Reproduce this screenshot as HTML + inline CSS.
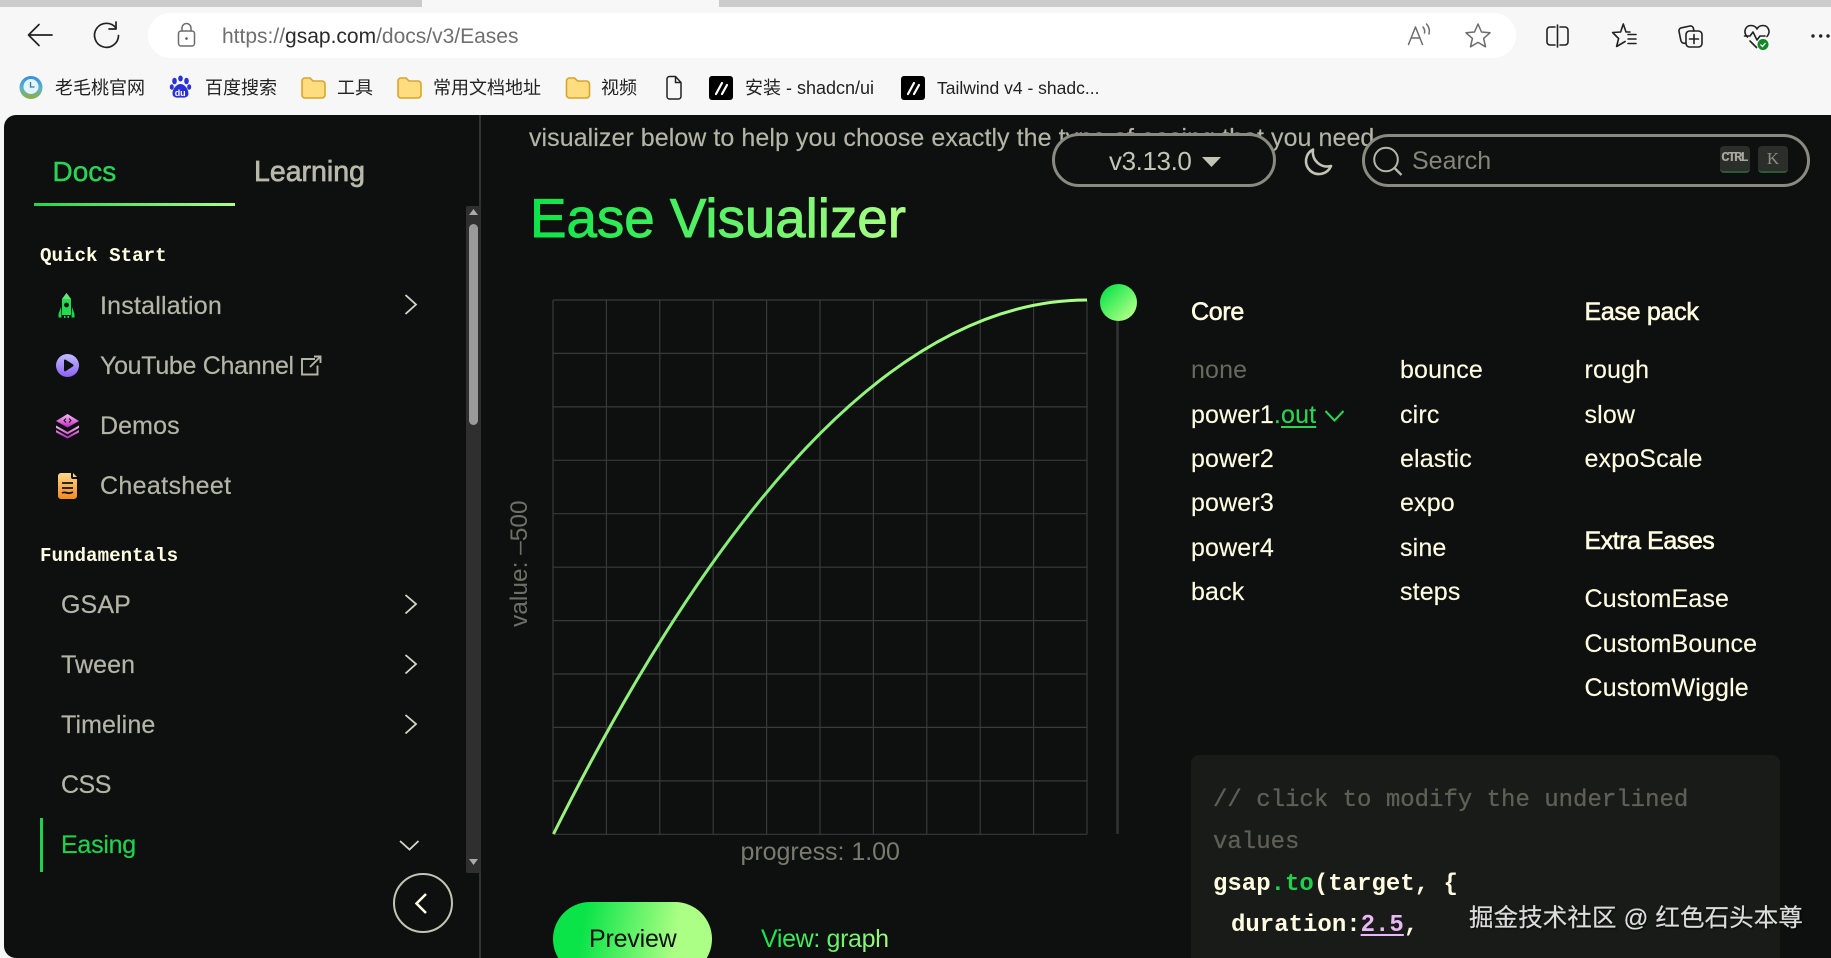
<!DOCTYPE html>
<html lang="zh-CN">
<head>
<meta charset="utf-8">
<title>Ease Visualizer</title>
<style>
html,body{margin:0;padding:0;width:1831px;height:958px;overflow:hidden;background:#f7f7f7;font-family:"Liberation Sans","Noto Sans CJK SC",sans-serif}
#root{position:relative;width:1831px;height:958px;overflow:hidden;background:#f7f7f7}
.t{position:absolute;white-space:nowrap;height:40px;line-height:40px;margin-top:-20px}
#panel{position:absolute;left:4px;top:115px;width:1827px;height:843px;background:#0e100f;border-radius:12px 0 0 12px;overflow:hidden}
.bm{font-size:18px;color:#222}
.nav{font-size:25px;color:#b5b5a6;letter-spacing:.1px;-webkit-text-stroke:.2px #b5b5a6}
.head{font-family:"Liberation Mono",monospace;font-weight:bold;font-size:19.2px;color:#fffce1}
.e{font-size:25px;color:#fffce1;letter-spacing:.15px;-webkit-text-stroke:.15px #fffce1}
.h{font-size:25px;color:#fffce1;letter-spacing:-.3px;-webkit-text-stroke:.6px #fffce1}
.c{font-family:"Liberation Mono",monospace;font-size:24px;color:#fffce1}
.g{background:linear-gradient(114deg,#0ae448,#abff84);-webkit-background-clip:text;background-clip:text;color:transparent}
</style>
</head>
<body>
<div id="root">
<div style="position:absolute;left:0;top:0;width:1831px;height:7px;background:#cbcbcb"></div>
<div style="position:absolute;left:422px;top:0;width:297px;height:8px;background:#f7f7f7"></div>
<div style="position:absolute;left:148px;top:13px;width:1368px;height:45px;background:#fff;border-radius:23px"></div>
<div class="t" style="left:222px;top:37px;font-size:21px;color:#6f6f6f">https://<span style="color:#2a2a2a">gsap.com</span>/docs/v3/Eases</div>

<div class="t bm" style="left:55px;top:88px">老毛桃官网</div>
<div class="t bm" style="left:205px;top:88px">百度搜索</div>
<div class="t bm" style="left:337px;top:88px">工具</div>
<div class="t bm" style="left:433px;top:88px">常用文档地址</div>
<div class="t bm" style="left:601px;top:88px">视频</div>
<div class="t bm" style="left:745px;top:88px">安装 - shadcn/ui</div>
<div class="t bm" style="left:937px;top:88px;font-size:17.5px">Tailwind v4 - shadc...</div>

<div id="panel"></div>

<!-- page text under header -->
<div class="t" style="left:529px;top:138px;font-size:25px;color:#b5b5a6;letter-spacing:.06px;-webkit-text-stroke:.15px #b5b5a6">visualizer below to help you choose exactly the type of easing that you need.</div>

<!-- pills -->
<div style="position:absolute;left:1052px;top:133px;width:218px;height:48px;border:3px solid #8a8a80;border-radius:28px;background:#0e100f"></div>
<div style="position:absolute;left:1362px;top:134px;width:442px;height:47px;border:3px solid #8a8a80;border-radius:28px;background:#0e100f"></div>
<div class="t" style="left:1109px;top:161px;font-size:26px;color:#c4c4b5;letter-spacing:-.4px">v3.13.0</div>
<div class="t" style="left:1412px;top:161px;font-size:25px;color:#85857a">Search</div>
<div style="position:absolute;left:1720px;top:146px;width:30px;height:25px;background:#2c2e2c;border-bottom:2px solid #2f5a38;border-radius:4px;text-align:center;font:bold 14px/25px 'Liberation Mono',monospace;color:#a8a89c;letter-spacing:-2px;overflow:hidden"><span style="margin-left:-2px">CTRL</span></div>
<div style="position:absolute;left:1758px;top:146px;width:30px;height:25px;background:#2c2e2c;border-bottom:2px solid #2f5a38;border-radius:4px;text-align:center;font:17px/25px 'Liberation Serif',serif;color:#8d8d82">K</div>

<!-- tabs + sidebar -->
<div class="t" style="left:52.500px;top:172px;font-size:28px;color:#2ad455;-webkit-text-stroke:.4px #2ad455">Docs</div>
<div class="t" style="left:254px;top:172px;font-size:28.500px;color:#b9b9aa;-webkit-text-stroke:.7px #b9b9aa">Learning</div>
<div style="position:absolute;left:34px;top:203px;width:201px;height:3px;background:linear-gradient(90deg,#22d64e,#abff84)"></div>
<div class="t head" style="left:40px;top:256px">Quick Start</div>
<div class="t nav" style="left:100px;top:306px;letter-spacing:.2px">Installation</div>
<div class="t nav" style="left:100px;top:366px;letter-spacing:-.3px">YouTube Channel</div>
<div class="t nav" style="left:100px;top:426px">Demos</div>
<div class="t nav" style="left:100px;top:486px;letter-spacing:.35px">Cheatsheet</div>
<div class="t head" style="left:40px;top:556px">Fundamentals</div>
<div class="t nav" style="left:61px;top:605px">GSAP</div>
<div class="t nav" style="left:61px;top:665px">Tween</div>
<div class="t nav" style="left:61px;top:725px">Timeline</div>
<div class="t nav" style="left:61px;top:785px;letter-spacing:-.5px">CSS</div>
<div class="t nav" style="left:61px;top:845px;color:#1fd24c;-webkit-text-stroke:.2px #1fd24c;letter-spacing:-.25px">Easing</div>
<div style="position:absolute;left:40px;top:818px;width:3px;height:54px;background:#1fd24c"></div>
<div style="position:absolute;left:479px;top:115px;width:1.500px;height:843px;background:#333"></div>
<div style="position:absolute;left:466px;top:206px;width:15px;height:667px;background:#2f2f2f;border-radius:2px"></div>
<div style="position:absolute;left:469px;top:224px;width:9px;height:201px;background:#9a9a9a;border-radius:5px"></div>
<div style="position:absolute;left:393px;top:873px;width:56px;height:56px;border:2px solid #c4c4b5;border-radius:50%"></div>

<!-- main -->
<div class="t" style="left:520px;top:563px;width:0;font-size:24.500px;color:#6f6f66;transform:rotate(-90deg);transform-origin:0 50%"><span style="position:absolute;left:-64px;top:0">value: –500</span></div>
<div class="t" style="left:740.500px;top:852px;font-size:25px;color:#7a7a6f;letter-spacing:-.03px">progress: 1.00</div>
<div style="position:absolute;left:553px;top:901.500px;width:159px;height:74px;border-radius:37px;background:linear-gradient(100deg,#0ae448 20%,#abff84 75%)"></div>
<div class="t" style="left:589px;top:939px;font-size:25px;color:#0e100f;letter-spacing:-.2px">Preview</div>
<div class="t g" style="left:761px;top:939px;font-size:25px;letter-spacing:-.35px">View: graph</div>

<!-- ease lists -->
<div class="t h" style="left:1191px;top:312px">Core</div>
<div class="t h" style="left:1584.500px;top:312px">Ease pack</div>
<div class="t h" style="left:1584.500px;top:541px;letter-spacing:-.45px">Extra Eases</div>
<div class="t e" style="left:1191px;top:370px;color:#68685f;-webkit-text-stroke:0">none</div>
<div class="t e" style="left:1191px;top:415px">power1<span style="color:#2ad455;-webkit-text-stroke:.15px #2ad455">.<span style="text-decoration:underline;text-underline-offset:3px">out</span></span></div>
<div class="t e" style="left:1191px;top:459px">power2</div>
<div class="t e" style="left:1191px;top:503px">power3</div>
<div class="t e" style="left:1191px;top:548px">power4</div>
<div class="t e" style="left:1191px;top:592px">back</div>
<div class="t e" style="left:1400px;top:370px">bounce</div>
<div class="t e" style="left:1400px;top:415px">circ</div>
<div class="t e" style="left:1400px;top:459px">elastic</div>
<div class="t e" style="left:1400px;top:503px">expo</div>
<div class="t e" style="left:1400px;top:548px">sine</div>
<div class="t e" style="left:1400px;top:592px">steps</div>
<div class="t e" style="left:1584.500px;top:370px">rough</div>
<div class="t e" style="left:1584.500px;top:415px">slow</div>
<div class="t e" style="left:1584.500px;top:459px">expoScale</div>
<div class="t e" style="left:1584.500px;top:599px">CustomEase</div>
<div class="t e" style="left:1584.500px;top:644px">CustomBounce</div>
<div class="t e" style="left:1584.500px;top:688px">CustomWiggle</div>

<!-- code -->
<div style="position:absolute;left:1191px;top:755px;width:589px;height:210px;background:#191b19;border-radius:8px"></div>
<div class="t c" style="left:1213px;top:800.500px;color:#5f5f56;-webkit-text-stroke:.3px #5f5f56">// click to modify the underlined</div>
<div class="t c" style="left:1213px;top:842.500px;color:#5f5f56;-webkit-text-stroke:.3px #5f5f56">values</div>
<div class="t c" style="left:1213px;top:884.500px;font-weight:bold">gsap<span style="color:#1fd24c">.to</span>(target, {</div>
<div class="t c" style="left:1231px;top:926px;font-weight:bold">duration:<span style="color:#e9b8f7;text-decoration:underline;text-underline-offset:3px">2.5</span>,</div>

<div class="t" style="left:1469px;top:918.500px;font-size:24.500px;color:#dcdcdc;text-shadow:1px 1px 2px #000;-webkit-text-stroke:.2px #dcdcdc;letter-spacing:.1px">掘金技术社区 @ 红色石头本尊</div>

<svg width="1831" height="958" viewBox="0 0 1831 958" style="position:absolute;left:0;top:0" fill="none">
<defs>
<linearGradient id="gr" x1="0" y1="0" x2="1" y2="1"><stop offset=".1" stop-color="#0ae448"/><stop offset=".85" stop-color="#abff84"/></linearGradient>
<linearGradient id="hg" gradientUnits="userSpaceOnUse" x1="530" y1="200" x2="905" y2="235"><stop offset="0" stop-color="#0ae448"/><stop offset="1" stop-color="#abff84"/></linearGradient>
<linearGradient id="rk" x1="0" y1="0" x2="0" y2="1"><stop offset="0" stop-color="#6fe07f"/><stop offset="1" stop-color="#18d848"/></linearGradient>
<linearGradient id="pu" x1="0" y1="0" x2="0" y2="1"><stop offset="0" stop-color="#c3baff"/><stop offset="1" stop-color="#8a62f5"/></linearGradient>
<linearGradient id="pk" x1="0" y1="0" x2="0" y2="1"><stop offset="0" stop-color="#f5bdf2"/><stop offset="1" stop-color="#c322c5"/></linearGradient>
<linearGradient id="og" x1="0" y1="0" x2="0" y2="1"><stop offset="0" stop-color="#ffd78a"/><stop offset="1" stop-color="#f78a1e"/></linearGradient>
<linearGradient id="cv" x1="0" y1="1" x2="1" y2="0"><stop offset="0" stop-color="#9cf27e"/><stop offset=".5" stop-color="#82ec78"/><stop offset="1" stop-color="#abff84"/></linearGradient>
<linearGradient id="lm" x1="0" y1="0" x2="0" y2="1"><stop offset="0" stop-color="#2f8fe0"/><stop offset=".55" stop-color="#5db5c0"/><stop offset="1" stop-color="#8fae3a"/></linearGradient>
</defs>

<text x="530" y="237" font-family="Liberation Sans" font-size="54.700" fill="url(#hg)" stroke="url(#hg)" stroke-width=".9">Ease Visualizer</text>

<!-- browser toolbar -->
<g stroke="#222" stroke-width="1.700" stroke-linecap="round" stroke-linejoin="round">
<path d="M52 35H29M39 24.500L28.500 35L39 45.500"/>
<path d="M116 28a12 12 0 1 0 2.500 7.500"/><path d="M116 22v7h-7"/>
</g>
<g stroke="#6c6c6c" stroke-width="1.500" stroke-linecap="round" stroke-linejoin="round">
<rect x="178.500" y="31" width="16" height="15" rx="2.500"/><path d="M182 31v-3a4.500 4.500 0 0 1 9 0v3"/>
<path d="M1408.500 44.500L1415.500 27L1422.500 44.500M1411 38H1420M1423 27a7 7 0 0 1 1.500 6M1426.500 24a11 11 0 0 1 2.500 10"/>
<polygon points="1478,24 1481.500,32 1490,32.800 1483.600,38.400 1485.500,46.800 1478,42.400 1470.500,46.800 1472.400,38.400 1466,32.800 1474.500,32"/>
</g>
<circle cx="186.500" cy="38.500" r="1.300" fill="#555"/>
<g stroke="#222" stroke-width="1.600" stroke-linecap="round" stroke-linejoin="round">
<path d="M1555 27h-5a3 3 0 0 0-3 3v12a3 3 0 0 0 3 3h5M1560 27h5a3 3 0 0 1 3 3v12a3 3 0 0 1-3 3h-5M1557.500 25v22"/>
<path d="M1630 32l-4 0-2.700-8-2.700 8-8 .5 6 6-2 8 8.500-5M1628 34.500h8M1628 39h8M1628 43.500h8"/>
<rect x="1686" y="31" width="16" height="16" rx="3.500"/><path d="M1694 34.500v9M1689.500 39h9M1694 31l-.5-2a3 3 0 0 0-3.500-3l-8.500 1.800a3 3 0 0 0-2.500 3.500l1.800 9a4 4 0 0 0 3.700 3h1.500"/>
<path d="M1747.500 37c-5-5-2-11.500 3.500-11.500 3 0 5 1.500 6 3.500 1-2 3-3.500 6-3.500 5.500 0 8 6.500 4 11M1744.500 36h5.500l3-4 4 8 3-4h5M1750 41l6.500 6.500"/>
</g>
<circle cx="1763" cy="44.500" r="5.500" fill="#118a26"/>
<path d="M1760.500 44.500l2 2 3-3.500" stroke="#fff" stroke-width="1.300"/>
<g fill="#222"><circle cx="1813" cy="36" r="1.700"/><circle cx="1820.700" cy="36" r="1.700"/><circle cx="1828" cy="36" r="1.700"/></g>

<!-- bookmark icons -->
<circle cx="31" cy="87.500" r="11.500" fill="url(#lm)"/><circle cx="31" cy="86.500" r="7.500" fill="#e4f3ff"/><path d="M30.500 82v5h4" stroke="#2a7fa8" stroke-width="1.300"/>
<g fill="#2932d8"><ellipse cx="174.500" cy="81" rx="2.300" ry="3.300"/><ellipse cx="180.500" cy="78.500" rx="2.300" ry="3"/><ellipse cx="186.500" cy="81" rx="2.300" ry="3.300"/><ellipse cx="171.800" cy="87" rx="2" ry="2.800"/><ellipse cx="189.200" cy="87" rx="2" ry="2.800"/><path d="M180.500 84c-4 0-8 5-8 9.500 0 4 4 4.500 8 4 4 .5 8 0 8-4 0-4.500-4-9.500-8-9.500z"/></g>
<text x="174.700" y="96" font-family="Liberation Sans" font-size="9" font-weight="bold" fill="#fff">du</text>
<g fill="#fedd80" stroke="#d7a52a" stroke-width="1.600">
<path d="M302 81a3 3 0 0 1 3-3h5l3 3h9a3 3 0 0 1 3 3v11a3 3 0 0 1-3 3h-17a3 3 0 0 1-3-3z"/>
<path d="M398 81a3 3 0 0 1 3-3h5l3 3h9a3 3 0 0 1 3 3v11a3 3 0 0 1-3 3h-17a3 3 0 0 1-3-3z"/>
<path d="M566.500 81a3 3 0 0 1 3-3h5l3 3h9a3 3 0 0 1 3 3v11a3 3 0 0 1-3 3h-17a3 3 0 0 1-3-3z"/>
</g>
<path d="M667 79a2.500 2.500 0 0 1 2.500-2.500h6l5.500 6v14a2.500 2.500 0 0 1-2.500 2.500h-9a2.500 2.500 0 0 1-2.500-2.500zM675.500 76.500v6h5.500" stroke="#222" stroke-width="1.500" stroke-linejoin="round"/>
<rect x="709" y="76" width="24" height="24" rx="3" fill="#000"/><path d="M716 94l6-11M722 94l5-9" stroke="#fff" stroke-width="2.200" stroke-linecap="round"/>
<rect x="901" y="76" width="24" height="24" rx="3" fill="#000"/><path d="M908 94l6-11M914 94l5-9" stroke="#fff" stroke-width="2.200" stroke-linecap="round"/>

<!-- header icons -->
<path d="M1202 157h19l-9.500 10z" fill="#c4c4b5"/>
<path d="M1313 149.500a13 13 0 1 0 18 16.500a14.500 14.500 0 0 1-18-16.500z" stroke="#c4c4b5" stroke-width="2.600" stroke-linejoin="round"/>
<circle cx="1386" cy="159.500" r="11.800" stroke="#b5b5a6" stroke-width="2"/><path d="M1394.500 168l7 7" stroke="#b5b5a6" stroke-width="2.400"/>

<!-- sidebar icons -->
<path d="M66.500 293l4.500 6v3.500h-9v-3.500zM62 303.500h9V315h-9z" fill="url(#rk)"/>
<path d="M62 299h9v16h-9z" fill="#22dc4f"/><path d="M66.500 293l4.500 6h-9z" fill="#6fe07f"/>
<circle cx="66.500" cy="305" r="2.400" fill="#0e100f"/>
<path d="M61 307l-2.500 7v3.500h3zM72 307l2.500 7v3.500h-3z" fill="#18d848"/><path d="M64 316h1.500v2H64zM67.500 316H69v2h-1.500z" fill="#18d848"/>
<circle cx="67.500" cy="365.500" r="11.500" fill="url(#pu)"/><path d="M64 360.500c0-.8.8-1.300 1.500-.9l7.500 4.800c.7.5.7 1.500 0 2l-7.500 4.800c-.7.4-1.500-.1-1.500-.9z" fill="#0e100f"/>
<path d="M67.500 414L79 421l-11.500 6.500L56 421z" fill="url(#pk)"/>
<path d="M56 425.500l11.500 6.500 11.500-6.500v2.400l-11.500 6.500-11.500-6.500zM56 430l11.500 6.500 11.500-6.500v2.400L67.500 438.500 56 432.400z" fill="url(#pk)"/>
<path d="M66 418.500l-2 2 2 2M69 418.500l2 2-2 2" stroke="#0e100f" stroke-width="1"/>
<path d="M61 473h10v4a2 2 0 0 0 2 2h4v17a3 3 0 0 1-3 3H61a3 3 0 0 1-3-3v-20a3 3 0 0 1 3-3zM73 473l4 4h-4z" fill="url(#og)"/>
<path d="M62 483h11M62 488h11M62 493c3-2 5 1 8 0 1 0 2-.5 3-1" stroke="#0e100f" stroke-width="1.800"/>
<path d="M315 359h-13v15.500h15.500v-9M310 367l10-10M314 356.500h6.500v6.500" stroke="#b5b5a6" stroke-width="1.900"/>
<g stroke="#d6d6c8" stroke-width="1.800">
<path d="M405.500 295l10.500 9.500-10.500 9.500M405.500 595l10.500 9-10.500 9.500M405.500 655l10.500 9-10.500 9.500M405.500 715l10.500 9-10.500 9.500M400 841l9.500 8.500L418.500 841"/>
</g>
<path d="M426 894l-9.500 9.500L426 913" stroke="#fffce1" stroke-width="2.500"/>
<path d="M473.500 209l-4.500 6h9zM473.500 865l-4.500-6h9z" fill="#aaa"/>

<!-- grid -->
<g stroke="#383a38" stroke-width="1.200">
<path d="M553 300V834.300M606.400 300V834.300M659.800 300V834.300M713.200 300V834.300M766.600 300V834.300M820 300V834.300M873.400 300V834.300M926.800 300V834.300M980.200 300V834.300M1033.600 300V834.300M1087 300V834.300"/>
<path d="M553 300H1087M553 353.400H1087M553 406.900H1087M553 460.300H1087M553 513.700H1087M553 567.200H1087M553 620.600H1087M553 674H1087M553 727.400H1087M553 780.900H1087M553 834.300H1087"/>
</g>
<path d="M1117.500 305V834" stroke="#333" stroke-width="2.500"/>
<path d="M553.500 834Q820 300 1087 300" stroke="url(#cv)" stroke-width="3"/>
<circle cx="1118.500" cy="302.500" r="18.500" fill="url(#gr)"/>
<path d="M1325.500 411l9 9.500 9-9.500" stroke="#2ad455" stroke-width="2"/>
</svg>
</div>
</body>
</html>
